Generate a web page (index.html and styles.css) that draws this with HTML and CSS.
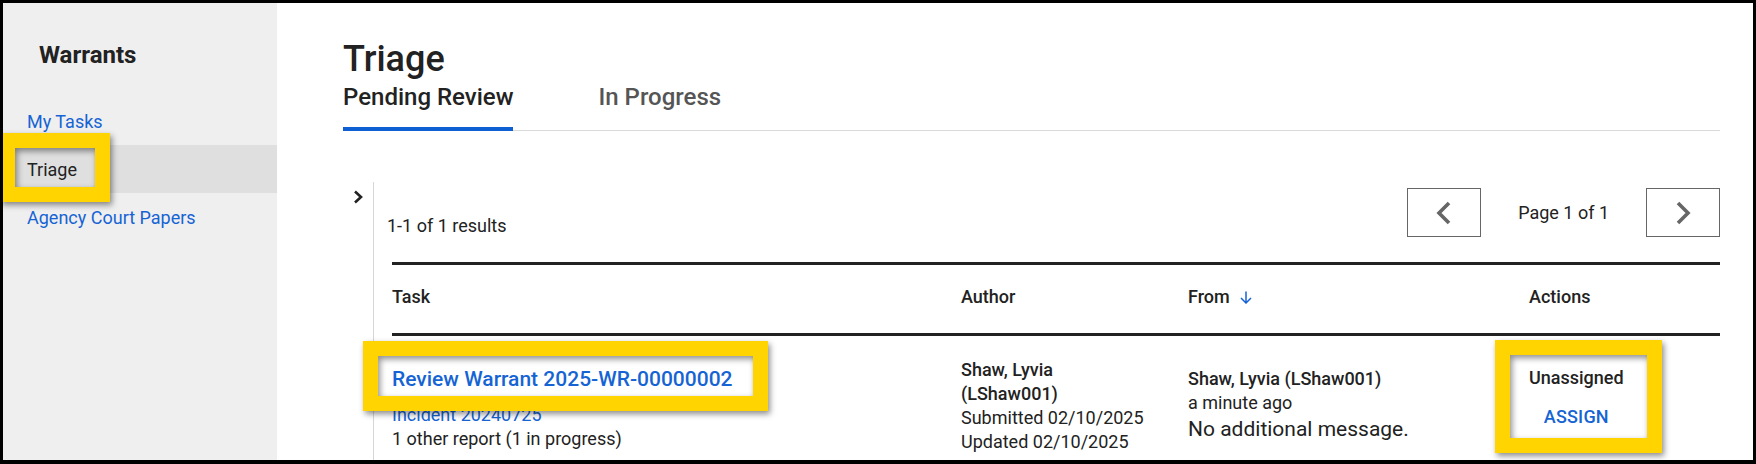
FILE: index.html
```html
<!DOCTYPE html>
<html lang="en">
<head>
<meta charset="utf-8">
<title>Triage</title>
<link rel="stylesheet" href="styles.css">
</head>
<body>
<div class="frame">
  <aside class="sidebar">
    <h2 class="side-title">Warrants</h2>
    <nav class="side-nav">
      <a class="side-link" href="#">My Tasks</a>
      <a class="side-link active" href="#">Triage</a>
      <a class="side-link" href="#">Agency Court Papers</a>
    </nav>
  </aside>
  <main class="main">
    <h1 class="page-title">Triage</h1>
    <div class="tabs">
      <span class="tab active">Pending Review</span>
      <span class="tab">In Progress</span>
    </div>
    <div class="panel">
      <div class="panel-toggle">
        <svg width="10" height="14" viewBox="0 0 10 14"><polyline points="2,1.5 8,7 2,12.5" fill="none" stroke="#222" stroke-width="2.6"/></svg>
      </div>
      <div class="panel-body">
        <div class="toolbar">
          <span class="results">1-1 of 1 results</span>
          <div class="pager">
            <span class="pager-btn"><svg width="16" height="24" viewBox="0 0 16 24"><polyline points="13,2 3,12 13,22" fill="none" stroke="#666" stroke-width="3.6"/></svg></span>
            <span class="pager-text">Page 1 of 1</span>
            <span class="pager-btn"><svg width="16" height="24" viewBox="0 0 16 24"><polyline points="3,2 13,12 3,22" fill="none" stroke="#666" stroke-width="3.6"/></svg></span>
          </div>
        </div>
        <div class="table">
          <div class="thead">
            <span>Task</span>
            <span>Author</span>
            <span class="sort">From <svg width="12" height="13" viewBox="0 0 12 13"><path d="M6 0.5V12M1 7l5 5 5-5" fill="none" stroke="#1664d4" stroke-width="1.5"/></svg></span>
            <span>Actions</span>
          </div>
          <div class="trow">
            <div class="cell cell-task">
              <a class="task-link" href="#">Review Warrant 2025-WR-00000002</a>
              <a class="incident" href="#">Incident 20240725</a>
              <div>1 other report (1 in progress)</div>
            </div>
            <div class="cell cell-author">
              <div class="strong">Shaw, Lyvia</div>
              <div class="strong">(LShaw001)</div>
              <div>Submitted 02/10/2025</div>
              <div>Updated 02/10/2025</div>
            </div>
            <div class="cell cell-from">
              <div class="strong">Shaw, Lyvia (LShaw001)</div>
              <div>a minute ago</div>
              <div class="message">No additional message.</div>
            </div>
            <div class="cell cell-actions">
              <div class="actions-box">
                <span class="strong">Unassigned</span>
                <a class="assign" href="#">ASSIGN</a>
              </div>
            </div>
          </div>
        </div>
      </div>
    </div>
  </main>
  <div class="hl hl-side"></div>
  <div class="hl hl-task"></div>
  <div class="hl hl-action"></div>
</div>
</body>
</html>
```
FILE: styles.css
```css
* { box-sizing: border-box; }
html, body { margin: 0; padding: 0; background: #fff; }
body { font-family: Roboto, "Liberation Sans", Arial, sans-serif; color: #222; }

.frame {
  position: relative;
  width: 1756px;
  height: 464px;
  border: 3px solid #000;
  border-bottom-width: 4px;
  display: flex;
  overflow: hidden;
}

/* Sidebar */
.sidebar { width: 274px; flex: none; background: #efefef; }
.side-title { margin: 0; padding: 38px 0 0 36px; font-size: 24px; font-weight: 700; line-height: 28px; }
.side-nav { margin-top: 28px; display: flex; flex-direction: column; }
.side-link {
  height: 48px; display: flex; align-items: center; padding-left: 24px;
  font-size: 18px; color: #1664d4; text-decoration: none;
}
.side-link.active { background: #dfdfdf; color: #222; }

/* Main */
.main { flex: 1; min-width: 0; padding: 35px 33px 0 66px; }
.page-title { margin: 0; font-size: 36px; font-weight: 500; line-height: 42px; }
.tabs { display: flex; gap: 85px; margin-top: 3px; border-bottom: 1px solid #d9d9d9; }
.tab {
  font-size: 24px; font-weight: 500; line-height: 28px; color: #555;
  padding-bottom: 16px; border-bottom: 4px solid transparent; margin-bottom: -1px;
}
.tab.active { color: #222; border-bottom-color: #0d5fd3; }

.panel { display: flex; margin-top: 51px; }
.panel-toggle { width: 31px; flex: none; border-right: 1px solid #d6d6d6; padding: 8px 0 0 10px; min-height: 300px; }
.panel-toggle svg { display: block; }
.panel-body { flex: 1; min-width: 0; padding-left: 18px; }

.toolbar { display: flex; align-items: flex-end; justify-content: space-between; padding-top: 6px; }
.results { font-size: 18px; line-height: 24px; margin-left: -5px; margin-bottom: -1px; }
.pager { display: flex; align-items: center; }
.pager-btn {
  width: 74px; height: 49px; border: 1px solid #666; background: #fff;
  display: flex; align-items: center; justify-content: center;
}
.pager-btn svg { display: block; }
.pager-text { font-size: 18px; line-height: 24px; margin: 0 37px; }

.table { margin-top: 25px; border-top: 3px solid #222; }
.thead, .trow { display: grid; grid-template-columns: 569px 227px 341px 1fr; }
.thead {
  padding: 20px 0 24px; border-bottom: 3px solid #222;
  font-size: 18px; font-weight: 500; line-height: 24px;
}
.sort { display: inline-flex; align-items: center; gap: 10px; }
.trow { font-size: 18px; line-height: 24px; align-items: start; }
.strong { font-weight: 500; }

.cell-task { padding-top: 29px; }
.task-link {
  display: block; font-size: 21px; font-weight: 500; line-height: 28px;
  color: #1664d4; text-decoration: none; margin-bottom: 10px;
}
.incident { display: block; color: #1664d4; text-decoration: none; }
.cell-author { padding-top: 22px; }
.cell-from { padding-top: 31px; }
.message { font-size: 21px; line-height: 28px; }
.cell-actions { padding-top: 30px; }
.actions-box { display: inline-flex; flex-direction: column; align-items: center; }
.assign {
  margin-top: 7px; padding: 8px 12px; font-weight: 500;
  color: #1664d4; text-decoration: none; letter-spacing: 0.2px;
}

/* Screenshot highlight annotations */
.hl {
  position: absolute;
  border: 15px solid #ffd400;
  box-shadow: 2px 3px 6px rgba(0, 0, 0, 0.45), inset 2px 3px 6px rgba(0, 0, 0, 0.45);
}
.hl-side { left: -3px; top: 130px; width: 110px; height: 69px; }
.hl-task { left: 360px; top: 338px; width: 405px; height: 70px; }
.hl-action { left: 1492px; top: 337px; width: 167px; height: 113px; }
```
